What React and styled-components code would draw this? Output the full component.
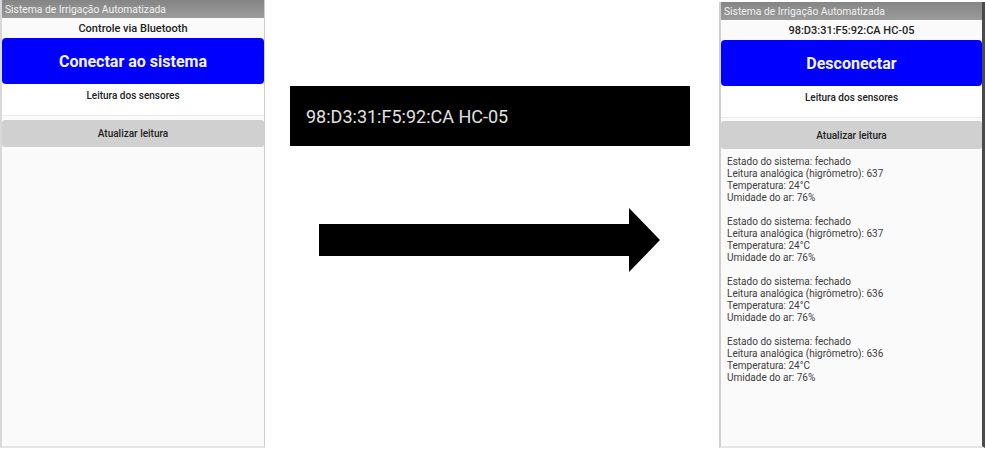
import React from "react"
import styled, { createGlobalStyle } from "styled-components"

const GlobalStyle = createGlobalStyle`
  body {
    margin: 0;
    background: #fff;
    font-family: Roboto, "Noto Sans", sans-serif;
  }
`

const Page = styled.div`
  display: flex;
  width: 985px;
  height: 450px;
  overflow: hidden;
  background: #fff;
`

const Screen = styled.div`
  display: flex;
  flex-direction: column;
  width: ${p => p.width}px;
  height: ${p => 448 - p.top}px;
  margin-top: ${p => p.top}px;
  background: #fafafa;
  border-left: 2px solid ${p => p.leftEdge};
  border-right: ${p => p.rightWidth}px solid ${p => p.rightEdge};
  border-bottom: 2px solid #e4e4e4;
  box-sizing: border-box;
`

const TitleBar = styled.div`
  height: 18px;
  flex: none;
  display: flex;
  align-items: center;
  padding-left: 3px;
  background: linear-gradient(#858585, #9b9b9b);
  color: #f2f2f2;
  font-size: 10.3px;
`

const Caption = styled.div`
  height: 20px;
  flex: none;
  display: flex;
  align-items: center;
  justify-content: center;
  color: #222;
  font-size: 11px;
  font-weight: 500;
`

const BigButton = styled.div`
  height: 46px;
  flex: none;
  display: flex;
  align-items: center;
  justify-content: center;
  background: #0000ff;
  border-radius: 4px;
  color: #f4f4ff;
  font-size: 16px;
  font-weight: 700;
`

const SectionLabel = styled.div`
  height: 32px;
  flex: none;
  padding-top: 6px;
  box-sizing: border-box;
  text-align: center;
  color: #222;
  font-size: 10px;
  font-weight: 500;
  background: #fff;
  border-bottom: 1px solid #ececec;
`

const GrayButton = styled.div`
  height: ${p => p.tall}px;
  flex: none;
  margin-top: ${p => p.gap}px;
  display: flex;
  align-items: center;
  justify-content: center;
  background: #d0d0d0;
  border-radius: 3px;
  color: #222;
  font-size: 10px;
  font-weight: 500;
`

const Readings = styled.div`
  padding: 7px 6px;
  color: #3c3c3c;
  font-size: 10px;
  line-height: 12px;
`

const Reading = styled.div`
  margin-bottom: 12px;
`

const Middle = styled.div`
  flex: 1;
  display: flex;
  flex-direction: column;
  align-items: center;
`

const AddressBox = styled.div`
  width: 400px;
  height: 60px;
  margin-top: 86px;
  margin-left: -4px;
  display: flex;
  align-items: center;
  padding-left: 16px;
  box-sizing: border-box;
  background: #000;
  color: #e0e0e0;
  font-size: 18px;
`

const ArrowWrap = styled.div`
  margin-top: 62px;
  margin-left: -5px;
  display: flex;
`

const readings = [637, 637, 636, 636]

const Arrow = () => (
  <svg width="341" height="64" viewBox="0 0 341 64">
    <polygon points="0,16 310,16 310,0 341,32 310,64 310,48 0,48" fill="#000" />
  </svg>
)

const App = () => (
  <>
    <GlobalStyle />
    <Page>
      <Screen width={265} top={0} leftEdge="#d8d8d8" rightEdge="#cfcfcf" rightWidth={1}>
        <TitleBar>Sistema de Irrigação Automatizada</TitleBar>
        <Caption>Controle via Bluetooth</Caption>
        <BigButton>Conectar ao sistema</BigButton>
        <SectionLabel>Leitura dos sensores</SectionLabel>
        <GrayButton gap={4} tall={27}>Atualizar leitura</GrayButton>
      </Screen>
      <Middle>
        <AddressBox>98:D3:31:F5:92:CA HC-05</AddressBox>
        <ArrowWrap>
          <Arrow />
        </ArrowWrap>
      </Middle>
      <Screen width={266} top={2} leftEdge="#cfcfcf" rightEdge="#4a4a4a" rightWidth={3}>
        <TitleBar>Sistema de Irrigação Automatizada</TitleBar>
        <Caption>98:D3:31:F5:92:CA HC-05</Caption>
        <BigButton>Desconectar</BigButton>
        <SectionLabel>Leitura dos sensores</SectionLabel>
        <GrayButton gap={3} tall={28}>Atualizar leitura</GrayButton>
        <Readings>
          {readings.map((v, i) => (
            <Reading key={i}>
              <div>Estado do sistema: fechado</div>
              <div>Leitura analógica (higrômetro): {v}</div>
              <div>Temperatura: 24°C</div>
              <div>Umidade do ar: 76%</div>
            </Reading>
          ))}
        </Readings>
      </Screen>
    </Page>
  </>
)

export default App
